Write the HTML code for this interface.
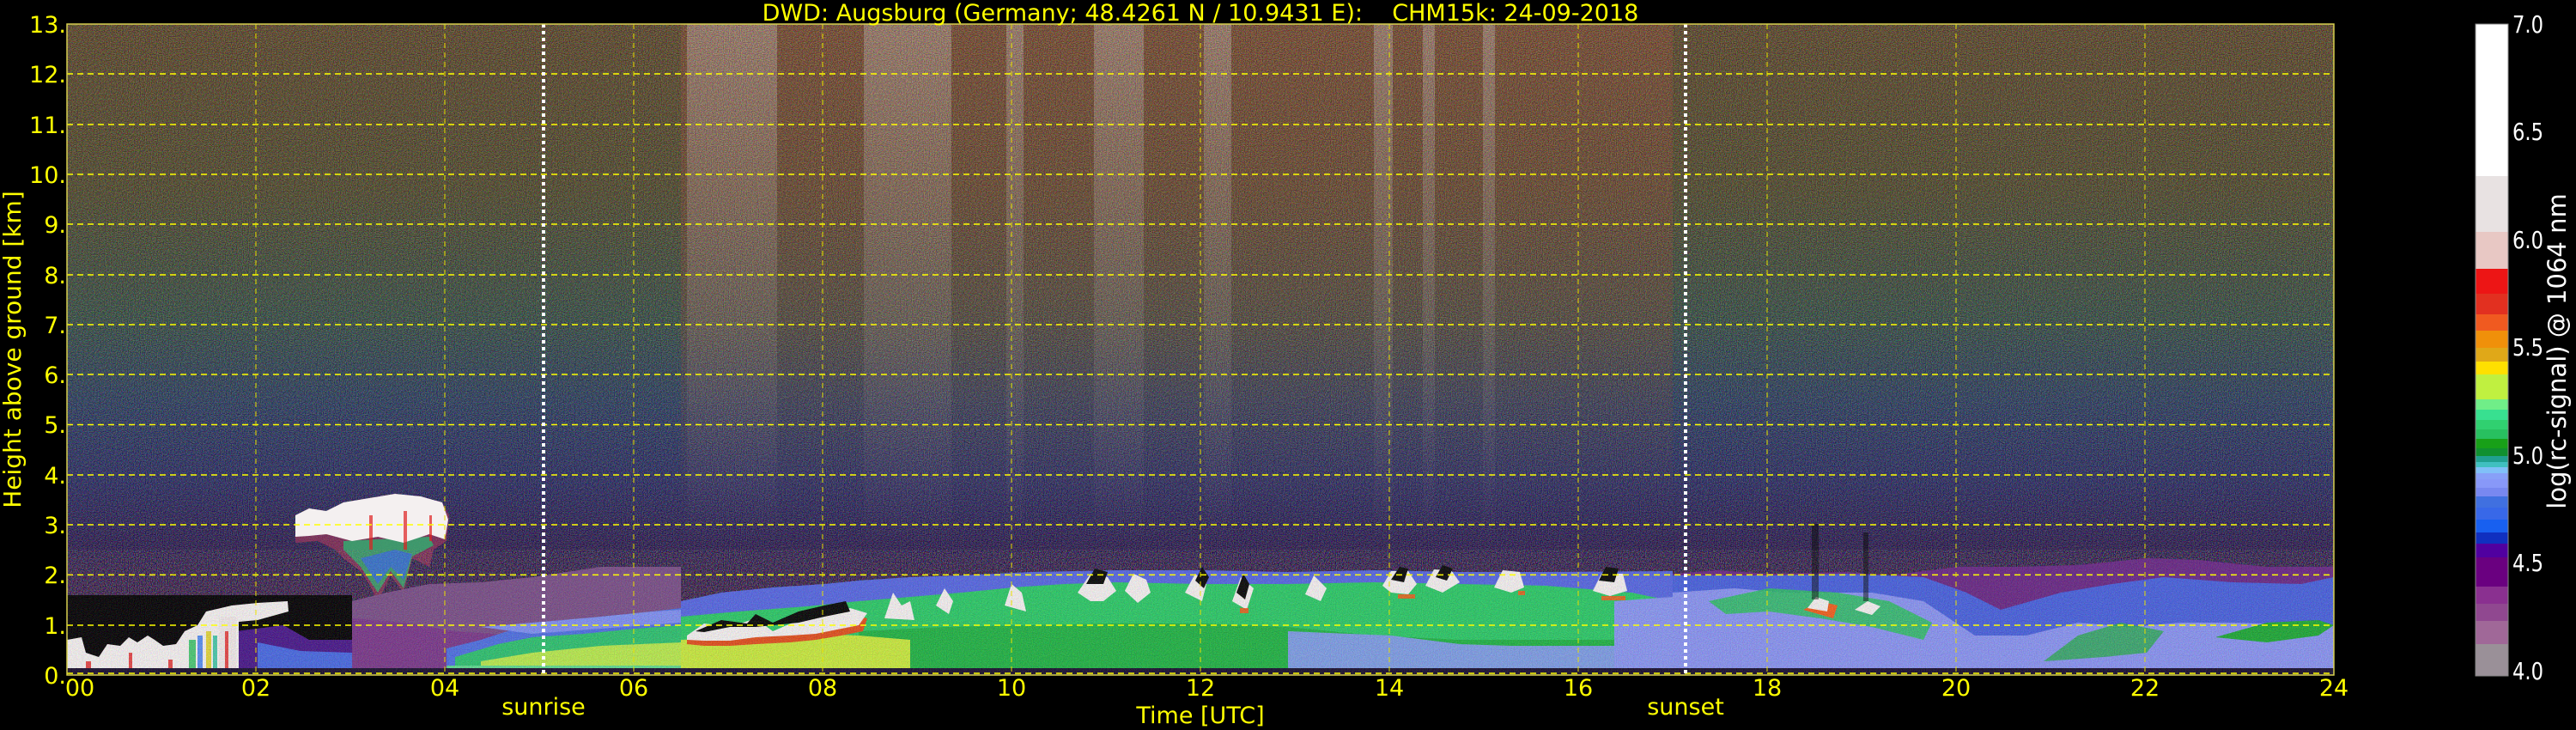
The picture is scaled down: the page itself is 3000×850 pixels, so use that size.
<!DOCTYPE html>
<html><head><meta charset="utf-8"><style>
html,body{margin:0;padding:0;background:#000;width:3000px;height:850px;overflow:hidden}
svg{display:block}
text{font-family:"DejaVu Sans","Liberation Sans",sans-serif;}
</style></head><body>
<svg width="3000" height="850" viewBox="0 0 3000 850" xmlns="http://www.w3.org/2000/svg">
<defs>
<linearGradient id="sky" x1="0" y1="28" x2="0" y2="786" gradientUnits="userSpaceOnUse">
<stop offset="0" stop-color="#5a4426"/>
<stop offset="0.25" stop-color="#4e4628"/>
<stop offset="0.45" stop-color="#344a40"/>
<stop offset="0.58" stop-color="#283a5c"/>
<stop offset="0.70" stop-color="#262860"/>
<stop offset="0.80" stop-color="#28184e"/>
<stop offset="0.88" stop-color="#361646"/>
<stop offset="1" stop-color="#361646"/>
</linearGradient>
<linearGradient id="mid" x1="0" y1="28" x2="0" y2="600" gradientUnits="userSpaceOnUse">
<stop offset="0" stop-color="#8a4a30" stop-opacity="0.55"/>
<stop offset="0.6" stop-color="#7a4030" stop-opacity="0.4"/>
<stop offset="1" stop-color="#6a3a3a" stop-opacity="0"/>
</linearGradient>
<linearGradient id="wcol" x1="0" y1="28" x2="0" y2="640" gradientUnits="userSpaceOnUse">
<stop offset="0" stop-color="#e8e0e0" stop-opacity="0.32"/>
<stop offset="0.5" stop-color="#d0c0c0" stop-opacity="0.18"/>
<stop offset="1" stop-color="#c0a0a0" stop-opacity="0"/>
</linearGradient>
<filter id="noise" x="0" y="0" width="100%" height="100%">
<feTurbulence type="fractalNoise" baseFrequency="0.85" numOctaves="1" seed="3" result="t"/>
<feColorMatrix type="matrix" values="5 0 0 0 -2.2  0 5 0 0 -2.2  0 0 5 0 -2.2  0 0 0 0 1"/>
</filter>
</defs>

<rect x="78" y="28" width="2640" height="758" fill="url(#sky)"/>
<rect x="793" y="28" width="1155" height="600" fill="url(#mid)"/>
<g fill="url(#wcol)">
<rect x="800" y="28" width="105" height="600"/>
<rect x="1006" y="28" width="102" height="600"/>
<rect x="1172" y="28" width="20" height="600"/>
<rect x="1274" y="28" width="58" height="600"/>
<rect x="1402" y="28" width="32" height="600"/>
<rect x="1600" y="28" width="22" height="600"/>
<rect x="1657" y="28" width="14" height="600"/>
<rect x="1727" y="28" width="14" height="600"/>
</g>
<rect x="78" y="28" width="2640" height="758" filter="url(#noise)" opacity="0.22"/>

<!-- 00-03 black region -->
<rect x="78" y="693" width="332" height="93" fill="#060406"/>
<polygon points="275,786 275,735 330,728 360,745 410,745 410,786" fill="#4a1a8a"/>
<polygon points="300,786 300,748 350,758 410,760 410,786" fill="#4a6ae0"/>
<polygon points="78,786 78,745 95,742 100,760 115,765 125,750 140,752 150,742 160,748 172,740 180,745 190,752 205,750 215,735 230,728 240,712 270,705 300,702 335,700 336,712 300,722 278,724 278,786" fill="#f4f0f0"/>
<rect x="255" y="718" width="20" height="68" fill="#f0e8e8"/>
<g fill="#e02020" opacity="0.8">
<rect x="100" y="770" width="6" height="16"/><rect x="150" y="760" width="4" height="26"/><rect x="196" y="768" width="5" height="18"/>
<rect x="262" y="735" width="4" height="50"/>
</g>
<g opacity="0.85">
<rect x="220" y="745" width="8" height="41" fill="#30c060"/>
<rect x="230" y="740" width="6" height="46" fill="#4080f0"/>
<rect x="240" y="735" width="6" height="51" fill="#e0d020"/>
<rect x="248" y="740" width="5" height="46" fill="#30c0a0"/>
</g>
<!-- cloud -->
<polygon points="344,600 360,592 380,595 400,585 430,580 460,575 490,578 515,585 523,600 520,630 505,640 500,660 480,650 470,690 455,670 440,700 430,680 420,665 400,650 390,640 370,630 344,632" fill="#c04060" opacity="0.5"/>
<polygon points="400,640 420,660 440,690 455,665 470,685 480,648 505,635 500,625 400,630" fill="#30b070" opacity="0.8"/>
<polygon points="420,650 440,680 455,660 470,675 480,645 460,640" fill="#3a6ae0" opacity="0.8"/>
<polygon points="344,600 360,592 380,595 400,585 430,580 460,575 490,578 515,585 522,605 518,628 500,622 470,632 440,625 410,630 380,622 360,624 344,625" fill="#f4f0f0"/>
<g fill="#e02020" opacity="0.7"><rect x="430" y="600" width="4" height="40"/><rect x="470" y="595" width="4" height="45"/><rect x="500" y="600" width="3" height="30"/></g>

<polygon points="410,786 410,700 450,690 500,680 560,678 620,672 700,660 793,660 793,786" fill="#7a5088"/>
<polygon points="410,786 410,720 470,725 530,735 600,740 700,735 793,730 793,786" fill="#7a3a8a"/>
<polygon points="520,786 520,755 560,745 600,732 640,725 700,718 760,712 793,708 793,786" fill="#5070e0"/>
<polygon points="560,730 620,725 700,718 760,712 793,710 793,725 700,732 620,738" fill="#8090f0"/>
<polygon points="530,786 530,765 580,750 620,742 680,738 740,732 793,728 793,786" fill="#30c070"/>
<polygon points="560,786 560,770 620,760 700,752 793,748 793,786" fill="#b8e850"/>
<rect x="520" y="775" width="273" height="11" fill="#60d890"/>

<!-- daytime -->
<polygon points="793,786 793,700 840,690 900,684 960,680 1000,676 1060,672 1120,670 1200,666 1300,664 1400,664 1500,666 1600,664 1700,666 1800,666 1948,665 1948,786" fill="#5868e0"/>
<polygon points="793,786 793,718 860,712 940,706 1000,700 1060,695 1120,690 1180,684 1240,680 1300,678 1400,680 1500,680 1600,678 1700,680 1800,682 1900,690 1948,700 1948,786" fill="#2ec868"/>
<polygon points="1000,786 1000,735 1100,730 1200,728 1300,726 1400,726 1500,730 1600,740 1700,745 1800,745 1948,745 1948,786" fill="#20a838" opacity="0.7"/>
<polygon points="793,786 793,745 860,742 940,738 1000,740 1060,745 1060,786" fill="#c8e840"/>
<polygon points="1500,786 1500,735 1620,740 1700,750 1760,752 1948,752 1948,786" fill="#8a9af4" opacity="0.9"/>
<polygon points="1880,786 1880,700 1948,695 1948,786" fill="#8a96f0"/>
<polygon points="800,742 820,730 850,735 880,725 900,740 930,728 960,722 990,715 1010,720 1005,735 980,740 950,745 920,748 880,750 850,752 820,752 800,750" fill="#e05020"/>
<polygon points="800,740 820,726 850,730 880,720 900,735 930,722 960,716 990,708 1010,714 1000,728 980,732 950,738 920,740 880,742 850,746 820,746 800,745" fill="#f4f0f0"/>
<polygon points="810,735 840,722 870,726 880,715 900,725 930,712 960,705 985,700 990,712 960,718 930,725 880,730 850,730 820,736" fill="#080808"/>
<g fill="#f4f0f0">
<polygon points="1030,720 1040,690 1050,705 1060,700 1065,722"/>
<polygon points="1090,705 1100,685 1110,700 1105,715"/>
<polygon points="1170,705 1178,680 1190,690 1195,712"/>
<polygon points="1255,690 1270,668 1290,672 1300,688 1285,700 1270,700"/>
<polygon points="1310,688 1320,668 1335,675 1340,690 1325,702"/>
<polygon points="1380,690 1392,668 1405,680 1400,700"/>
<polygon points="1435,700 1445,672 1460,685 1452,710"/>
<polygon points="1520,692 1530,670 1545,685 1538,700"/>
<polygon points="1610,682 1620,665 1640,665 1650,680 1640,692 1620,690"/>
<polygon points="1660,682 1670,663 1690,664 1700,678 1680,690"/>
<polygon points="1740,684 1750,664 1770,666 1775,684 1760,690"/>
<polygon points="1855,688 1865,668 1890,668 1895,688 1875,694"/>
</g>
<g fill="#0a0a0a">
<polygon points="1265,680 1275,662 1290,666 1285,680"/><polygon points="1392,676 1400,660 1408,672 1402,685"/>
<polygon points="1620,675 1630,660 1640,662 1635,678"/><polygon points="1672,672 1680,658 1692,662 1685,676"/>
<polygon points="1862,676 1870,660 1885,662 1880,678"/><polygon points="1440,690 1448,668 1455,680 1450,698"/>
</g>
<g fill="#f06020" opacity="0.9">
<rect x="1628" y="692" width="20" height="5"/><rect x="1865" y="694" width="28" height="5"/><rect x="1444" y="708" width="10" height="6"/><rect x="1768" y="688" width="8" height="5"/>
</g>

<!-- evening -->
<polygon points="1948,786 1948,668 2000,664 2060,668 2150,666 2200,670 2280,660 2350,660 2420,658 2500,650 2560,652 2640,660 2718,660 2718,786" fill="#6a2a86"/>
<polygon points="1948,786 1948,670 2060,670 2150,668 2240,672 2290,690 2330,710 2400,690 2460,680 2520,672 2600,678 2680,680 2718,672 2718,786" fill="#4a62dc"/>
<polygon points="1948,786 1948,690 2020,685 2080,690 2180,690 2240,700 2270,720 2300,740 2360,740 2420,725 2480,730 2540,725 2600,725 2718,728 2718,786" fill="#8a94f0"/>
<polygon points="1990,700 2060,685 2140,690 2200,700 2250,725 2240,745 2180,730 2120,720 2060,712 2010,715" fill="#2ec060" opacity="0.85"/>
<polygon points="2380,770 2420,740 2470,725 2520,735 2500,760 2450,765" fill="#2aaa50" opacity="0.8"/>
<polygon points="2580,742 2640,725 2700,722 2718,728 2700,740 2640,748" fill="#20a838"/>
<polygon points="2100,710 2120,700 2140,705 2135,720" fill="#f06020"/>
<polygon points="2105,708 2115,695 2130,700 2128,712" fill="#f4f0f0"/>
<polygon points="2160,710 2175,700 2190,706 2180,716" fill="#f4f0f0"/>
<rect x="2110" y="610" width="8" height="88" fill="#0a0a0a" opacity="0.5"/>
<rect x="2170" y="620" width="6" height="80" fill="#0a0a0a" opacity="0.5"/>

<rect x="78" y="778" width="2640" height="8" fill="#1a1030"/>
<rect x="78" y="640" width="2640" height="146" filter="url(#noise)" opacity="0.1"/>

<g stroke="#ffff00" stroke-width="1.5" stroke-dasharray="7 5" fill="none">
<line x1="78" y1="728" x2="2718" y2="728"/><line x1="78" y1="669.4" x2="2718" y2="669.4"/>
<line x1="78" y1="611" x2="2718" y2="611"/><line x1="78" y1="553" x2="2718" y2="553"/>
<line x1="78" y1="494.5" x2="2718" y2="494.5"/><line x1="78" y1="436" x2="2718" y2="436"/>
<line x1="78" y1="378" x2="2718" y2="378"/><line x1="78" y1="320" x2="2718" y2="320"/>
<line x1="78" y1="261" x2="2718" y2="261"/><line x1="78" y1="203" x2="2718" y2="203"/>
<line x1="78" y1="145" x2="2718" y2="145"/><line x1="78" y1="86" x2="2718" y2="86"/>
<line x1="78" y1="784" x2="2718" y2="784"/>
</g>
<g stroke="#e8e000" stroke-width="1" stroke-dasharray="6 5" fill="none">
<line x1="298" y1="28" x2="298" y2="786"/><line x1="518" y1="28" x2="518" y2="786"/>
<line x1="738" y1="28" x2="738" y2="786"/><line x1="958" y1="28" x2="958" y2="786"/>
<line x1="1178" y1="28" x2="1178" y2="786"/><line x1="1398" y1="28" x2="1398" y2="786"/>
<line x1="1618" y1="28" x2="1618" y2="786"/><line x1="1838" y1="28" x2="1838" y2="786"/>
<line x1="2058" y1="28" x2="2058" y2="786"/><line x1="2278" y1="28" x2="2278" y2="786"/>
<line x1="2498" y1="28" x2="2498" y2="786"/>
</g>
<g stroke="#ffffff" stroke-width="4" stroke-dasharray="4 4">
<line x1="633" y1="28" x2="633" y2="786"/><line x1="1963" y1="28" x2="1963" y2="786"/>
</g>
<rect x="78" y="28" width="2640" height="758" fill="none" stroke="#d8d050" stroke-width="1.5"/>

<text x="1398" y="24" fill="#ffff00" font-size="27" text-anchor="middle" xml:space="preserve">DWD: Augsburg (Germany; 48.4261 N / 10.9431 E):    CHM15k: 24-09-2018</text>
<g fill="#ffff00" font-size="27" text-anchor="end">
<text x="77" y="796">0.</text><text x="77" y="738">1.</text><text x="77" y="679">2.</text>
<text x="77" y="621">3.</text><text x="77" y="563">4.</text><text x="77" y="504">5.</text>
<text x="77" y="446">6.</text><text x="77" y="388">7.</text><text x="77" y="330">8.</text>
<text x="77" y="271">9.</text><text x="77" y="213">10.</text><text x="77" y="155">11.</text>
<text x="77" y="96">12.</text><text x="77" y="38">13.</text>
</g>
<g fill="#ffff00" font-size="27" text-anchor="middle">
<text x="93" y="810">00</text><text x="298" y="810">02</text><text x="518" y="810">04</text>
<text x="738" y="810">06</text><text x="958" y="810">08</text><text x="1178" y="810">10</text>
<text x="1398" y="810">12</text><text x="1618" y="810">14</text><text x="1838" y="810">16</text>
<text x="2058" y="810">18</text><text x="2278" y="810">20</text><text x="2498" y="810">22</text>
<text x="2718" y="810">24</text>
<text x="633" y="832">sunrise</text><text x="1963" y="832">sunset</text>
<text x="1398" y="842">Time [UTC]</text>
</g>
<text transform="translate(24,407) rotate(-90)" fill="#ffff00" font-size="28" text-anchor="middle">Height above ground [km]</text>

<g>
<rect x="2883" y="28" width="38" height="177" fill="#ffffff"/>
<rect x="2883" y="205" width="38" height="65" fill="#e8e2e2"/>
<rect x="2883" y="270" width="38" height="43" fill="#e8c8c4"/>
<rect x="2883" y="313" width="38" height="29" fill="#ed1515"/>
<rect x="2883" y="342" width="38" height="24" fill="#e23020"/>
<rect x="2883" y="366" width="38" height="19" fill="#f05a20"/>
<rect x="2883" y="385" width="38" height="20" fill="#f0900a"/>
<rect x="2883" y="405" width="38" height="16" fill="#e0a818"/>
<rect x="2883" y="421" width="38" height="15" fill="#ffe000"/>
<rect x="2883" y="436" width="38" height="29" fill="#c0f040"/>
<rect x="2883" y="465" width="38" height="12" fill="#70ee88"/>
<rect x="2883" y="477" width="38" height="12" fill="#38e090"/>
<rect x="2883" y="489" width="38" height="11" fill="#30d070"/>
<rect x="2883" y="500" width="38" height="11" fill="#28c060"/>
<rect x="2883" y="511" width="38" height="11" fill="#18a018"/>
<rect x="2883" y="522" width="38" height="9" fill="#109030"/>
<rect x="2883" y="531" width="38" height="7" fill="#20a090"/>
<rect x="2883" y="538" width="38" height="6" fill="#40c0c0"/>
<rect x="2883" y="544" width="38" height="7" fill="#80c0f8"/>
<rect x="2883" y="551" width="38" height="7" fill="#88a0f8"/>
<rect x="2883" y="558" width="38" height="10" fill="#8898f8"/>
<rect x="2883" y="568" width="38" height="10" fill="#7888f0"/>
<rect x="2883" y="578" width="38" height="13" fill="#4070e0"/>
<rect x="2883" y="591" width="38" height="14" fill="#3868e8"/>
<rect x="2883" y="605" width="38" height="15" fill="#1860f0"/>
<rect x="2883" y="620" width="38" height="13" fill="#1030c0"/>
<rect x="2883" y="633" width="38" height="16" fill="#5000a0"/>
<rect x="2883" y="649" width="38" height="34" fill="#6a0080"/>
<rect x="2883" y="683" width="38" height="20" fill="#8a3090"/>
<rect x="2883" y="703" width="38" height="20" fill="#904890"/>
<rect x="2883" y="723" width="38" height="27" fill="#a06898"/>
<rect x="2883" y="750" width="38" height="37" fill="#9a9098"/>
<rect x="2883" y="28" width="38" height="759" fill="none" stroke="#888" stroke-width="1"/>
</g>
<g fill="#ffffff" font-size="28">
<text x="2926" y="38" textLength="36" lengthAdjust="spacingAndGlyphs">7.0</text>
<text x="2926" y="163" textLength="36" lengthAdjust="spacingAndGlyphs">6.5</text>
<text x="2926" y="289" textLength="36" lengthAdjust="spacingAndGlyphs">6.0</text>
<text x="2926" y="414" textLength="36" lengthAdjust="spacingAndGlyphs">5.5</text>
<text x="2926" y="540" textLength="36" lengthAdjust="spacingAndGlyphs">5.0</text>
<text x="2926" y="665" textLength="36" lengthAdjust="spacingAndGlyphs">4.5</text>
<text x="2926" y="791" textLength="36" lengthAdjust="spacingAndGlyphs">4.0</text>
</g>
<text transform="translate(2988,409) rotate(-90)" fill="#ffffff" font-size="29" text-anchor="middle">log(rc-signal) @ 1064 nm</text>
</svg>
</body></html>
